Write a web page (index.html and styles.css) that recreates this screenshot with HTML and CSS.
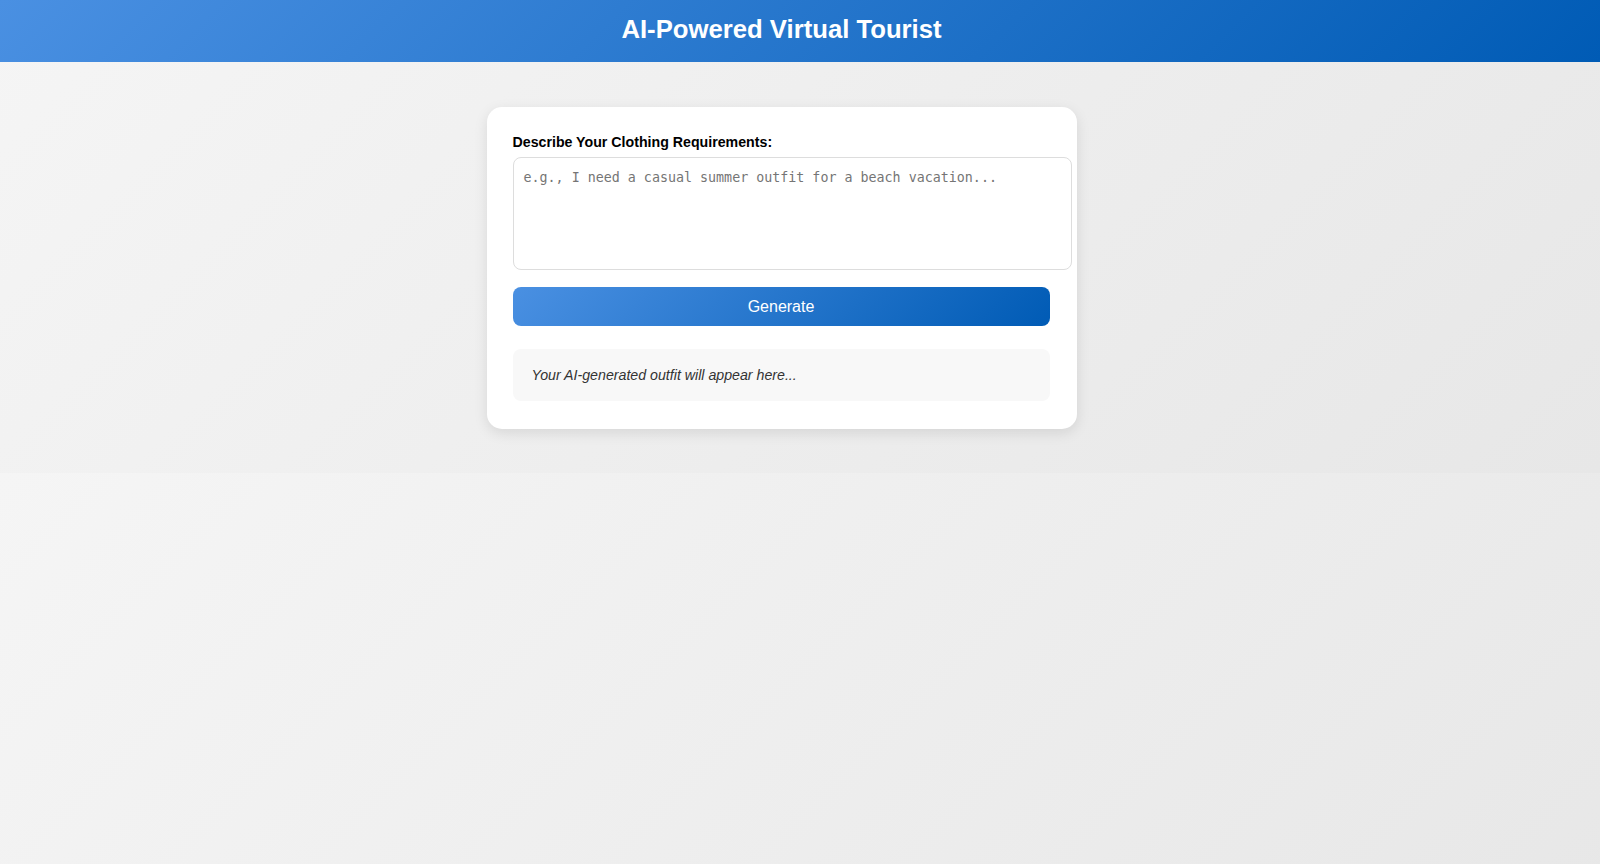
FILE: index.html
```html
<!DOCTYPE html>
<html lang="en">
<head>
<meta charset="utf-8">
<title>AI-Powered Virtual Tourist</title>
<link rel="stylesheet" href="styles.css">
</head>
<body>
<header class="site-header">
  <h1 class="site-title">AI-Powered Virtual Tourist</h1>
</header>
<main class="main">
  <section class="card">
    <label class="field-label" for="req">Describe Your Clothing Requirements:</label>
    <textarea id="req" class="req-input" placeholder="e.g., I need a casual summer outfit for a beach vacation..."></textarea>
    <button class="gen-btn" type="button">Generate</button>
    <div class="output">Your AI-generated outfit will appear here...</div>
  </section>
</main>
</body>
</html>
```

FILE: styles.css
```css
body {
  margin: 0;
  font-family: "Liberation Sans", Arial, sans-serif;
  background: linear-gradient(135deg, #f5f5f5 0%, #e7e7e7 100%);
}

.site-header {
  background: linear-gradient(135deg, #4a90e2 0%, #005bb5 100%);
  padding: 14px 0 18px;
  height: 30px;
}

.site-title {
  margin: 0 37px 0 0;
  text-align: center;
  color: #ffffff;
  font-size: 25.7px;
  line-height: 30px;
  font-weight: bold;
}

.main {
  display: flex;
  justify-content: center;
  padding: 45px 37px 44px 0;
}

.card {
  width: 537px;
  background: #ffffff;
  border-radius: 15px;
  padding: 27px 27px 28px 26px;
  box-shadow: 0 4px 14px rgba(0, 0, 0, 0.1);
  display: flex;
  flex-direction: column;
}

.field-label {
  font-size: 14.2px;
  font-weight: bold;
  color: #000000;
  line-height: 16px;
  margin-bottom: 7px;
}

.req-input {
  box-sizing: content-box;
  width: 537px;
  height: 91px;
  padding: 10px;
  border: 1px solid #dddddd;
  border-radius: 8px;
  font-family: "DejaVu Sans Mono", monospace;
  font-size: 13.33px;
  line-height: 20px;
  resize: none;
  outline: none;
  margin: 0;
}

.req-input::placeholder {
  color: #757575;
}

.gen-btn {
  margin-top: 17px;
  height: 39px;
  border: none;
  border-radius: 8px;
  background: linear-gradient(135deg, #4a90e2 0%, #005bb5 100%);
  color: #ffffff;
  font-family: "Liberation Sans", Arial, sans-serif;
  font-size: 16px;
  cursor: pointer;
}

.output {
  margin-top: 23px;
  background: #f8f8f8;
  border-radius: 8px;
  padding: 18px 19px;
  font-size: 14.2px;
  line-height: 16px;
  font-style: italic;
  color: #333333;
}
```
